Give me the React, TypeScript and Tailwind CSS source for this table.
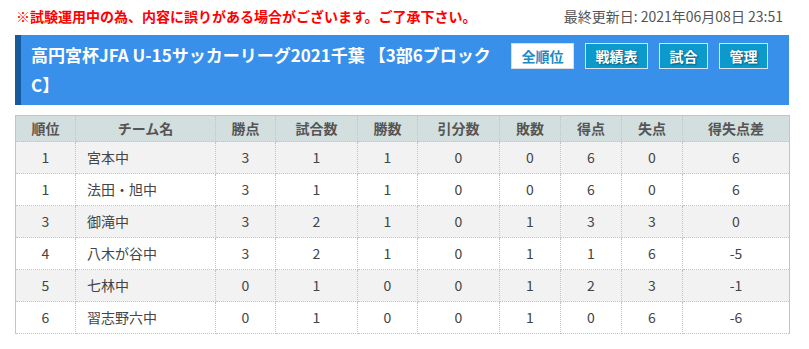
const rows = [
  { rank: 1, team: "宮本中", pts: 3, gp: 1, w: 1, d: 0, l: 0, gf: 6, ga: 0, gd: "6" },
  { rank: 1, team: "法田・旭中", pts: 3, gp: 1, w: 1, d: 0, l: 0, gf: 6, ga: 0, gd: "6" },
  { rank: 3, team: "御滝中", pts: 3, gp: 2, w: 1, d: 0, l: 1, gf: 3, ga: 3, gd: "0" },
  { rank: 4, team: "八木が谷中", pts: 3, gp: 2, w: 1, d: 0, l: 1, gf: 1, ga: 6, gd: "-5" },
  { rank: 5, team: "七林中", pts: 0, gp: 1, w: 0, d: 0, l: 1, gf: 2, ga: 3, gd: "-1" },
  { rank: 6, team: "習志野六中", pts: 0, gp: 1, w: 0, d: 0, l: 1, gf: 0, ga: 6, gd: "-6" },
];

const headers = ["順位", "チーム名", "勝点", "試合数", "勝数", "引分数", "敗数", "得点", "失点", "得失点差"];
const widths = ["w-[60px]", "w-[140px]", "w-[60px]", "w-[82px]", "w-[60px]", "w-[82px]", "w-[61px]", "w-[61px]", "w-[61px]", "w-[107px]"];

const font = { fontFamily: '"Noto Sans CJK JP", "Noto Sans", sans-serif' };

export default function App() {
  return (
    <div className="w-[809px] h-[349px] bg-white pl-[15px] pr-[20px] text-[#333]" style={font}>
      <div className="flex h-[35px] items-center justify-between pb-[2px]">
        <p className="pl-px text-[14px] font-bold text-[#ff0000]">
          ※試験運用中の為、内容に誤りがある場合がございます。ご了承下さい。
        </p>
        <p className="pr-[6px] text-[14px] text-[#555]">最終更新日: 2021年06月08日 23:51</p>
      </div>

      <div className="flex h-[70px] border-l-[6px] border-[#175a9c] bg-[#3890ea]">
        <h1 className="w-[480px] pl-[10px] pt-[5px] text-[17px] font-bold leading-[30px] text-white">
          高円宮杯JFA U-15サッカーリーグ2021千葉 【3部6ブロック C】
        </h1>
        <div className="flex flex-1 items-start justify-end gap-[11px] pr-[21px] pt-[8px]">
          <button className="h-[26px] w-[63px] border border-[#dddddd] bg-white text-[14px] font-bold text-[#1a8cc6]">
            全順位
          </button>
          {["戦績表", "試合", "管理"].map((b) => (
            <button
              key={b}
              className={`h-[26px] ${b.length === 3 ? "w-[63px]" : "w-[49px]"} border border-[#d8e4ea] bg-[#0c99cc] text-[14px] font-bold text-white [text-shadow:1px_1px_2px_rgba(0,0,0,0.45)]`}
            >
              {b}
            </button>
          ))}
        </div>
      </div>

      <table className="mt-[10px] w-[774px] table-fixed border-collapse text-[14px]">
        <thead>
          <tr className="h-[26px] bg-[#d3dfdf]">
            {headers.map((h, i) => (
              <th
                key={h}
                className={`${widths[i]} border border-dotted border-[#c4c4c4] p-0 font-bold text-[#555]`}
                style={{ borderTopStyle: "solid", ...(i === 0 ? { borderLeftStyle: "solid" } : {}), ...(i === 9 ? { borderRightStyle: "solid" } : {}) }}
              >
                {h}
              </th>
            ))}
          </tr>
        </thead>
        <tbody>
          {rows.map((r, idx) => {
            const cells = [r.rank, r.team, r.pts, r.gp, r.w, r.d, r.l, r.gf, r.ga, r.gd];
            return (
              <tr key={idx} className={`h-[32px] ${idx % 2 === 0 ? "bg-[#f2f2f2]" : "bg-white"}`}>
                {cells.map((c, i) => (
                  <td
                    key={i}
                    className={`border border-dotted border-[#c4c4c4] p-0 text-[#444] ${i === 1 ? "pl-[11px] text-left" : "text-center"}`}
                    style={{ ...(i === 0 ? { borderLeftStyle: "solid" } : {}), ...(i === 9 ? { borderRightStyle: "solid" } : {}) }}
                  >
                    {c}
                  </td>
                ))}
              </tr>
            );
          })}
        </tbody>
      </table>
    </div>
  );
}
